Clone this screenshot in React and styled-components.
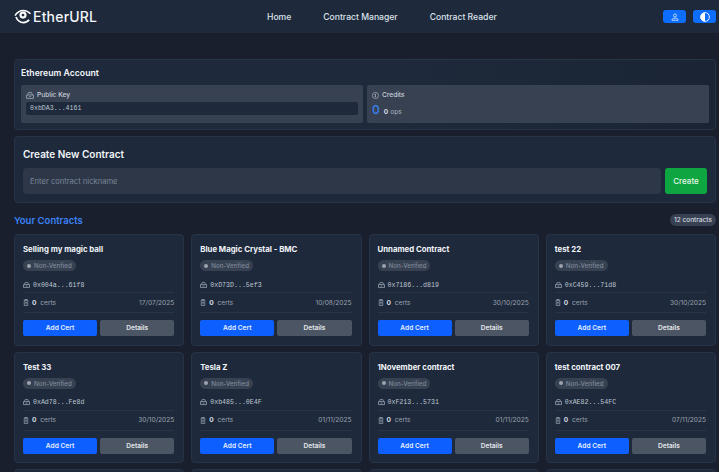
import React from 'react';
import styled, { createGlobalStyle } from 'styled-components';

const Global = createGlobalStyle`
  html, body { margin: 0; padding: 0; height: 472px; overflow: hidden; background: #1a1f2e; }
  body { font-family: Inter, "Noto Sans", sans-serif; color: #fff; }
  * { box-sizing: border-box; }
`;

const Header = styled.header`
  height: 33px; background: #1e293b; display: grid; grid-template-columns: 253px 1fr auto;
  align-items: center; padding: 0 3px 0 14px;
`;
const Logo = styled.div`
  display: flex; align-items: center; gap: 1px; font-size: 14px; font-weight: 500; letter-spacing: 0.2px; color: #f1f5f9;
`;
const Nav = styled.nav`
  display: flex; gap: 32px; font-size: 8.6px; font-weight: 500; color: #dbe2ea;
`;
const Actions = styled.div`display: flex; justify-content: flex-end; gap: 7px;`;
const IconBtn = styled.button`
  width: 23px; height: 13px; border: 0; border-radius: 3px; background: #0d6efd; padding: 0;
  display: flex; align-items: center; justify-content: center; color: #dbeafe;
`;
const Main = styled.main`padding: 26px 3px 0 14px;`;
const Panel = styled.section`
  background: #1e293b; border: 1px solid #263447; border-radius: 4px;
`;
const AccountPanel = styled(Panel)`
  height: 71px; padding: 8px 6px 6px; margin-bottom: 6px;
  background: linear-gradient(90deg, #1e293b 0%, #1e293b 55%, #1a2434 100%);
`;
const PanelTitle = styled.h2`margin: 0 0 6px; font-size: 8.7px; line-height: 11px; font-weight: 600; color: #f1f5f9;`;
const InfoGrid = styled.div`display: grid; grid-template-columns: 1fr 1fr; gap: 4px;`;
const InfoBox = styled.div`
  height: 38px; background: #374151; border-radius: 2px; padding: 6px 5px 5px; font-size: 6.6px; font-weight: 500; color: #c9d0da;
`;
const InfoLabel = styled.div`display: flex; align-items: center; gap: 3px; line-height: 9px; height: 9px;`;
const KeyField = styled.div`
  margin-top: 2px; height: 13px; background: #1e293b; border-radius: 2px; padding: 0 4px;
  font: 6.6px/13px "Liberation Mono", monospace; color: #bcc5d1;
`;
const Credits = styled.div`display: flex; align-items: baseline; gap: 4px; margin-top: 3px; font-size: 6.6px; color: #9ca3af;`;
const CreditNum = styled.span`font-size: 12px; line-height: 14px; color: #3b82f6; font-weight: 500;`;
const Strong = styled.b`color: #d8dee6; font-weight: 700; margin-right: 2px;`;
const CreatePanel = styled(Panel)`height: 67px; padding: 11px 8px 0;`;
const CreateTitle = styled.h2`margin: 0 0 8px; font-size: 10px; line-height: 12px; font-weight: 600; color: #f1f5f9;`;
const CreateRow = styled.div`display: flex; gap: 4px;`;
const Input = styled.div`
  flex: 1; height: 26px; background: #2d3748; border-radius: 4px; padding: 0 7px;
  font-size: 7.6px; line-height: 28px; color: #7c8798;
`;
const CreateBtn = styled.button`
  width: 42px; height: 26px; border: 0; border-radius: 3px; background: #0ea641; color: #e8f5ec;
  font: 500 8px Inter, sans-serif; padding: 0;
`;
const SectionHead = styled.div`
  display: flex; align-items: center; justify-content: space-between; height: 31px;
`;
const SectionTitle = styled.h3`margin: 3px 0 0; font-size: 9.5px; font-weight: 600; color: #3b82f6;`;
const CountBadge = styled.span`
  width: 46px; height: 12px; border-radius: 6px; background: #374151; color: #d8dee6;
  font-size: 6.5px; font-weight: 500; line-height: 12px; text-align: center; margin-top: 2px;
`;
const Cards = styled.div`display: grid; grid-template-columns: repeat(4, 1fr); column-gap: 7px; row-gap: 6px;`;
const Card = styled.article`
  height: 111.5px; background: #1e293b; border: 1px solid #263447; border-radius: 4px; padding: 9px 9px 0 8px;
`;
const CardTitle = styled.h4`margin: 0 0 5px; font-size: 7.8px; line-height: 11px; font-weight: 700; color: #f1f5f9; white-space: nowrap;`;
const Status = styled.span`
  display: flex; width: fit-content; align-items: center; gap: 3px; height: 11px; padding: 0 4px; border-radius: 6px;
  background: #374151; color: #7f8a9b; font-size: 6.2px; font-weight: 500;
`;
const Dot = styled.i`width: 4px; height: 4px; border-radius: 50%; background: #9ca3af;`;
const AddrRow = styled.div`
  display: flex; align-items: center; gap: 3px; height: 15px; margin-top: 7px; border-bottom: 1px solid #283548;
  font: 6.6px "Liberation Mono", monospace; color: #bcc5d1;
`;
const MetaRow = styled.div`
  display: flex; align-items: center; gap: 3px; height: 20px; border-bottom: 1px solid #283548; font-size: 6.6px; color: #9ca3af;
`;
const DateText = styled.span`margin-left: auto; font-size: 6.6px;`;
const Buttons = styled.div`display: grid; grid-template-columns: 1fr 1fr; gap: 3px; margin-top: 7px;`;
const Btn = styled.button`
  height: 16px; border: 0; border-radius: 2px; padding: 0; font: 600 6.6px Inter, sans-serif;
  background: ${p => (p.$primary ? '#0d5fff' : '#4b5563')};
  color: ${p => (p.$primary ? '#e6efff' : '#e5e7eb')};
`;

const UserIcon = () => (
  <svg width="8" height="8" viewBox="0 0 16 16" fill="none" stroke="currentColor" strokeWidth="1.6">
    <circle cx="8" cy="5" r="3" /><path d="M2 14.5h12v-1.500c0-1.500-2-2.500-6-2.500s-6 1-6 2.500z" />
  </svg>
);
const ContrastIcon = () => (
  <svg width="10" height="10" viewBox="0 0 16 16">
    <circle cx="8" cy="8" r="7" fill="none" stroke="#fff" strokeWidth="1.4" /><path d="M8 1a7 7 0 0 0 0 14z" fill="#fff" />
  </svg>
);
const WalletIcon = ({ size = 7 }) => (
  <svg width={size} height={size * 0.86} viewBox="0 0 16 14" fill="none" stroke="#8e99a8" strokeWidth="2">
    <path d="M1 6h14v7H1zM3 6l2-5h6l2 5M6 9.500h4" />
  </svg>
);
const CoinIcon = () => (
  <svg width="7" height="7" viewBox="0 0 16 16" fill="none" stroke="#aab3c0" strokeWidth="1.600">
    <circle cx="8" cy="8" r="7" /><path d="M8 4v8M6 6h3M6 10h3" />
  </svg>
);
const DocIcon = () => (
  <svg width="6" height="7" viewBox="0 0 12 16" fill="none" stroke="#8e99a8" strokeWidth="1.800">
    <path d="M2 2h8v13H2zM4 1h4v3H4zM4 8h4M4 11h4" />
  </svg>
);
const LogoIcon = () => (
  <svg width="18" height="15" viewBox="0 0 19 16" fill="none">
    <path d="M1 7C3 3.500 6 1.500 10 1.500c2.500 0 5 1 7.500 3.500" stroke="#fff" strokeWidth="1.600" />
    <circle cx="9.500" cy="6.500" r="3.800" fill="#fff" /><circle cx="9.500" cy="6.500" r="1.500" fill="#1e293b" />
    <path d="M2 8.500c1.500 3.500 4.500 6 8 6 2.500 0 4.500-1 6-3" stroke="#fff" strokeWidth="1.800" />
  </svg>
);

const contracts = [
  ['Selling my magic ball', '0x004a...61f8', '17/07/2025'],
  ['Blue Magic Crystal - BMC', '0xD73D...5ef3', '10/08/2025'],
  ['Unnamed Contract', '0x7186...d819', '30/10/2025'],
  ['test 22', '0xC459...71d8', '30/10/2025'],
  ['Test 33', '0xAd78...Fe8d', '30/10/2025'],
  ['Tesla Z', '0xb485...0E4F', '01/11/2025'],
  ['1November contract', '0xF213...5731', '01/11/2025'],
  ['test contract 007', '0xAE82...54FC', '07/11/2025'],
];

export default function App() {
  return (
    <>
      <Global />
      <Header>
        <Logo><LogoIcon />EtherURL</Logo>
        <Nav><span>Home</span><span>Contract Manager</span><span>Contract Reader</span></Nav>
        <Actions>
          <IconBtn aria-label="Account"><UserIcon /></IconBtn>
          <IconBtn aria-label="Theme"><ContrastIcon /></IconBtn>
        </Actions>
      </Header>
      <Main>
        <AccountPanel>
          <PanelTitle>Ethereum Account</PanelTitle>
          <InfoGrid>
            <InfoBox>
              <InfoLabel><WalletIcon size={8} />Public Key</InfoLabel>
              <KeyField>0xbDA3...4161</KeyField>
            </InfoBox>
            <InfoBox>
              <InfoLabel><CoinIcon />Credits</InfoLabel>
              <Credits><CreditNum>0</CreditNum><span><Strong>0</Strong>ops</span></Credits>
            </InfoBox>
          </InfoGrid>
        </AccountPanel>
        <CreatePanel>
          <CreateTitle>Create New Contract</CreateTitle>
          <CreateRow>
            <Input>Enter contract nickname</Input>
            <CreateBtn>Create</CreateBtn>
          </CreateRow>
        </CreatePanel>
        <SectionHead>
          <SectionTitle>Your Contracts</SectionTitle>
          <CountBadge>12 contracts</CountBadge>
        </SectionHead>
        <Cards>
          {contracts.map(([name, addr, date]) => (
            <Card key={addr}>
              <CardTitle>{name}</CardTitle>
              <Status><Dot />Non-Verified</Status>
              <AddrRow><WalletIcon />{addr}</AddrRow>
              <MetaRow><DocIcon /><span><Strong>0</Strong> certs</span><DateText>{date}</DateText></MetaRow>
              <Buttons><Btn $primary>Add Cert</Btn><Btn>Details</Btn></Buttons>
            </Card>
          ))}
          {[0, 1, 2, 3].map(i => <Card key={i} />)}
        </Cards>
      </Main>
    </>
  );
}
